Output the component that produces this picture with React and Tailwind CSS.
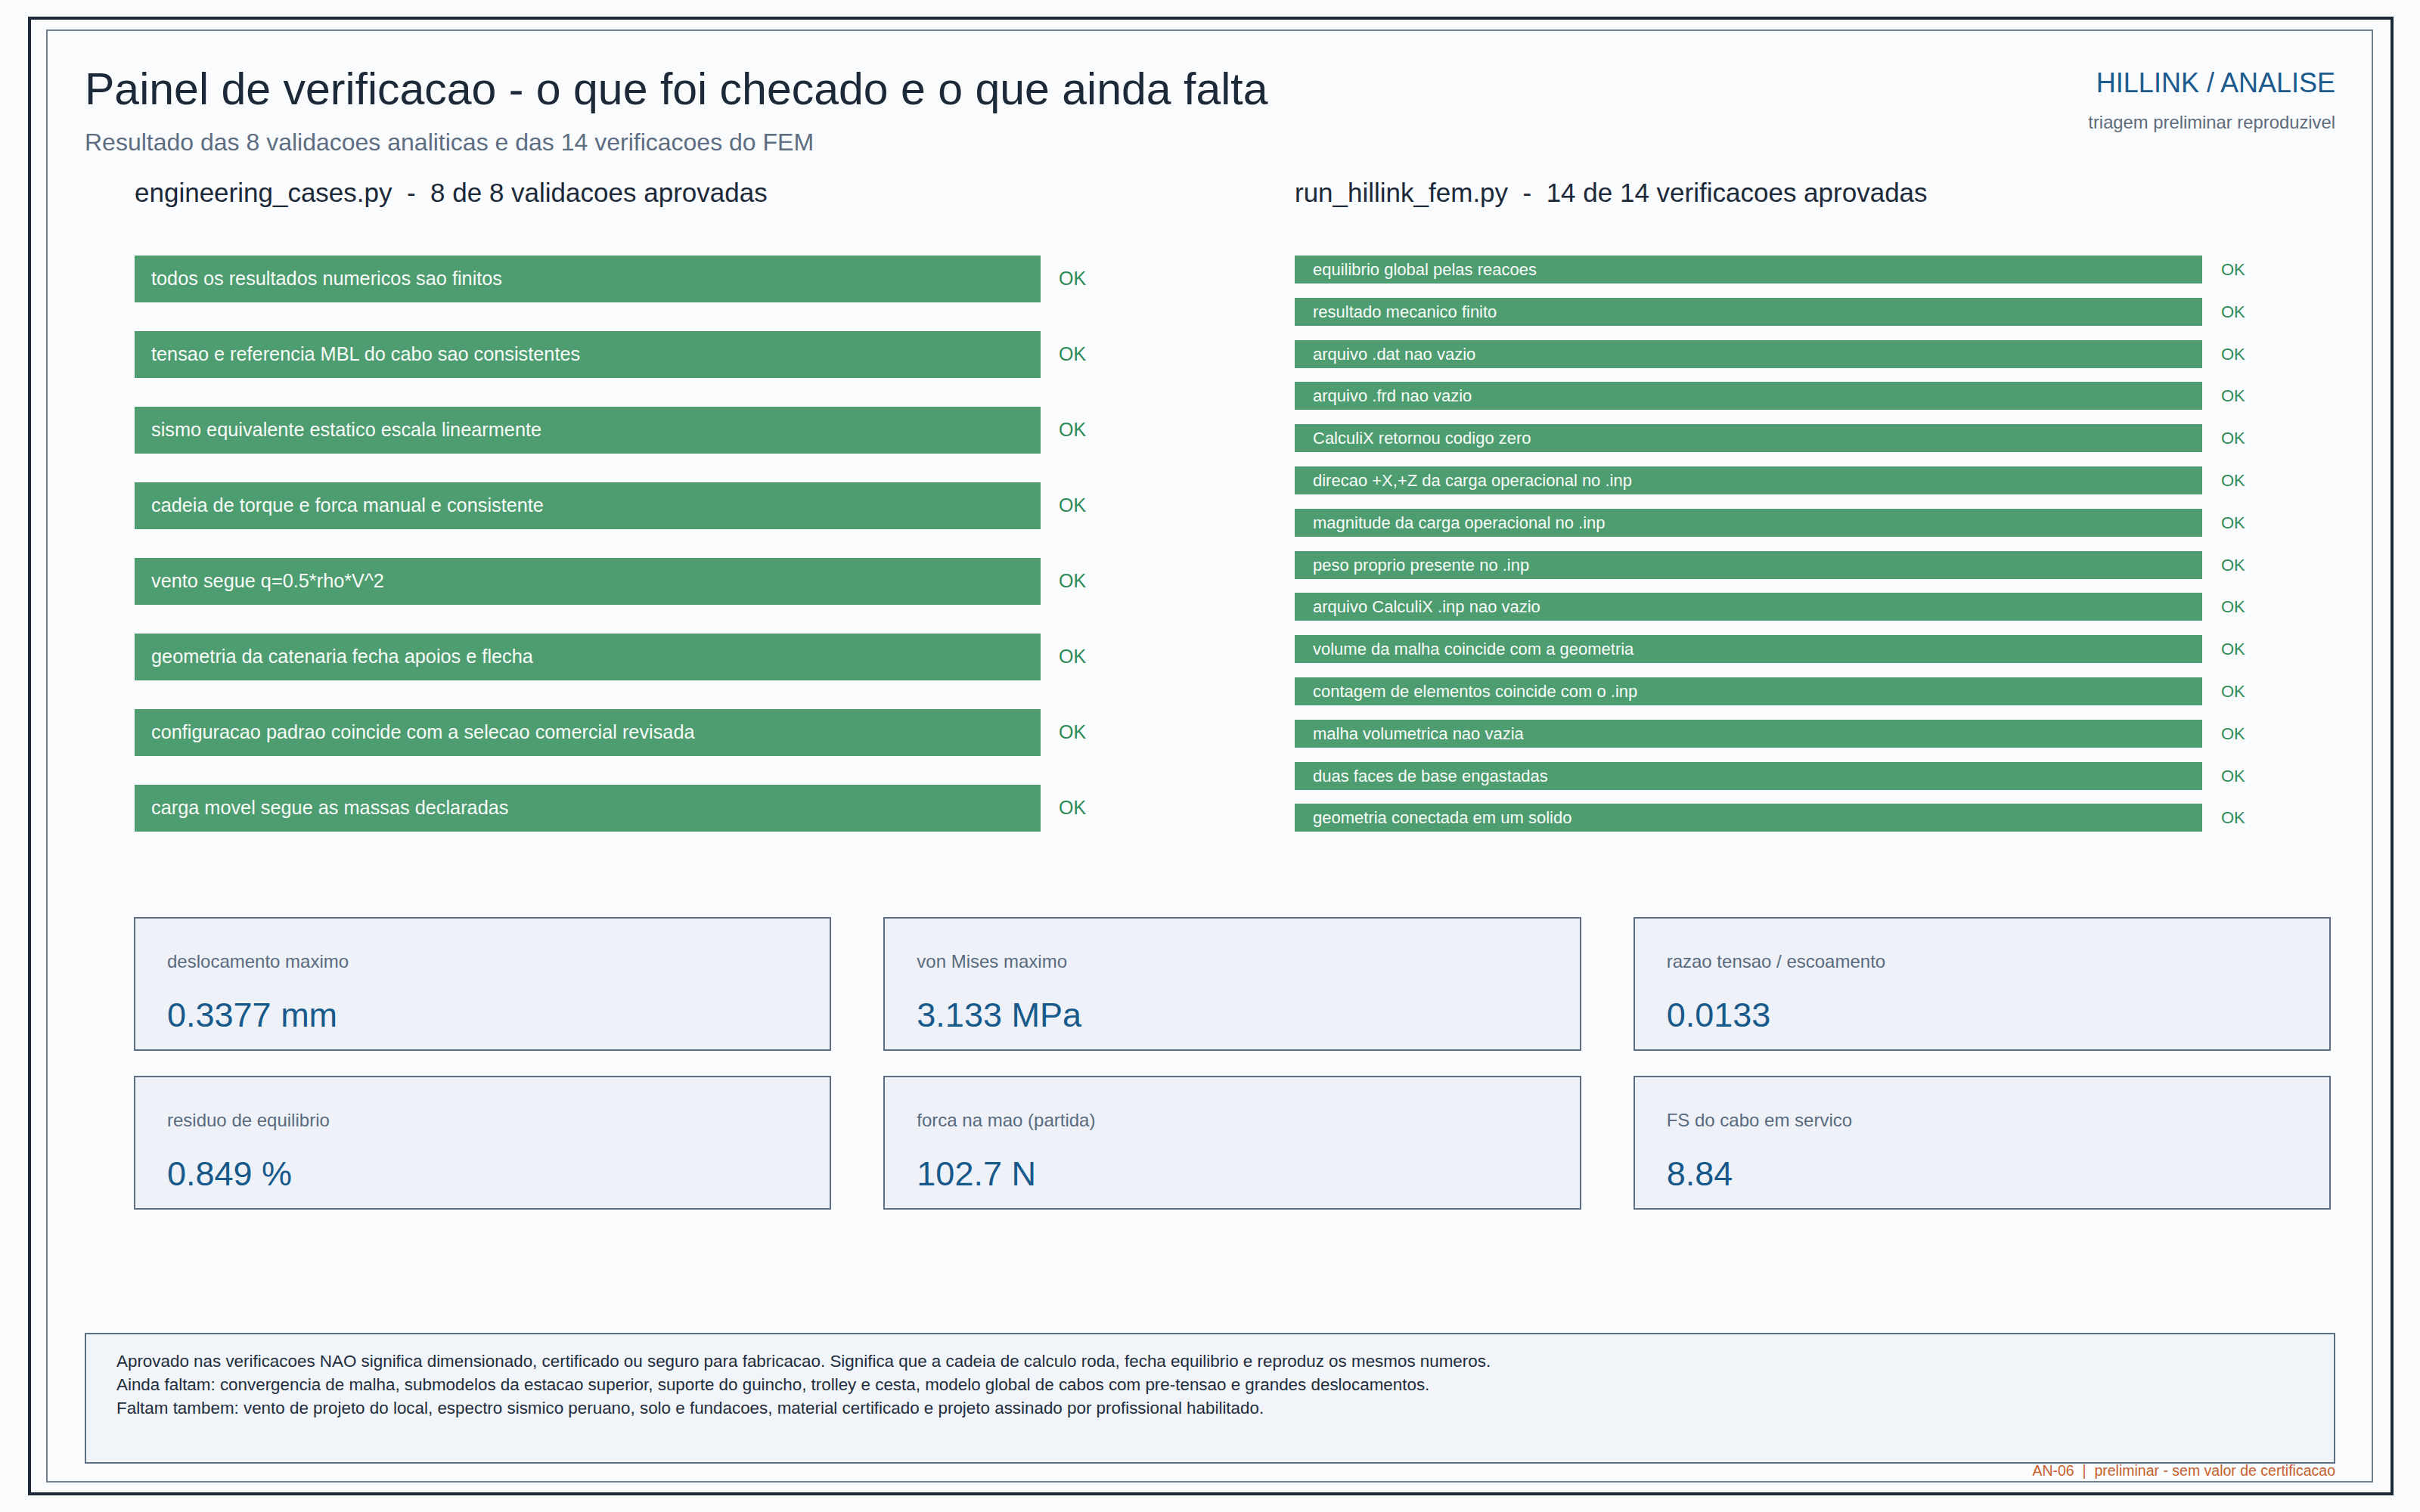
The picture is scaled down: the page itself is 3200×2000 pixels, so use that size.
import React from 'react'

const analyticChecks = [
  'todos os resultados numericos sao finitos',
  'tensao e referencia MBL do cabo sao consistentes',
  'sismo equivalente estatico escala linearmente',
  'cadeia de torque e forca manual e consistente',
  'vento segue q=0.5*rho*V^2',
  'geometria da catenaria fecha apoios e flecha',
  'configuracao padrao coincide com a selecao comercial revisada',
  'carga movel segue as massas declaradas',
]

const femChecks = [
  'equilibrio global pelas reacoes',
  'resultado mecanico finito',
  'arquivo .dat nao vazio',
  'arquivo .frd nao vazio',
  'CalculiX retornou codigo zero',
  'direcao +X,+Z da carga operacional no .inp',
  'magnitude da carga operacional no .inp',
  'peso proprio presente no .inp',
  'arquivo CalculiX .inp nao vazio',
  'volume da malha coincide com a geometria',
  'contagem de elementos coincide com o .inp',
  'malha volumetrica nao vazia',
  'duas faces de base engastadas',
  'geometria conectada em um solido',
]

const metrics = [
  { label: 'deslocamento maximo', value: '0.3377 mm' },
  { label: 'von Mises maximo', value: '3.133 MPa' },
  { label: 'razao tensao / escoamento', value: '0.0133' },
  { label: 'residuo de equilibrio', value: '0.849 %' },
  { label: 'forca na mao (partida)', value: '102.7 N' },
  { label: 'FS do cabo em servico', value: '8.84' },
]

const Metric = ({ label, value }) => (
  <div className="h-[177px] border-2 border-[#5d6d82] bg-[#eef2f8] pl-[42px] pt-[45px]">
    <div className="text-[24px] leading-none text-[#5a6a7e]">{label}</div>
    <div className="mt-[36px] text-[45px] leading-none text-[#17598a]">{value}</div>
  </div>
)

const App = () => {
  return (
    <div
      className="w-[3200px] h-[2000px] bg-[#fafbfd] pt-[22px] pl-[37px]"
      style={{ fontFamily: '"Liberation Sans", Arial, sans-serif' }}
    >
      <div className="w-[3128px] h-[1956px] border-4 border-[#1c2a3a] pl-[20px] pt-[13px]">
        <div className="w-[3077px] h-[1922px] border-2 border-[#6f8090] pl-[49px] pr-[48px] pt-[48px]">

          {/* header */}
          <div className="flex justify-between">
            <div>
              <div className="text-[59px] leading-none text-[#1c2938]">
                Painel de verificacao - o que foi checado e o que ainda falta
              </div>
              <div className="mt-[24px] text-[32px] leading-none text-[#5e6e82]">
                Resultado das 8 validacoes analiticas e das 14 verificacoes do FEM
              </div>
            </div>
            <div className="flex flex-col items-end pt-[3px]">
              <div className="text-[36px] leading-none text-[#1b5a8c]">HILLINK / ANALISE</div>
              <div className="mt-[22px] text-[23.8px] leading-none text-[#5f6b7a]">triagem preliminar reproduzivel</div>
            </div>
          </div>

          {/* checks */}
          <div className="mt-[33px] flex pl-[66px]">
            <div className="w-[1534px]">
              <div className="text-[35px] leading-none text-[#1c2938] whitespace-pre">
                {'engineering_cases.py  -  8 de 8 validacoes aprovadas'}
              </div>
              <div className="mt-[66px] flex flex-col gap-[38px]">
                {analyticChecks.map((item, index) => (
                  <div key={index} className="flex items-center">
                    <div className="w-[1198px] h-[62px] bg-[#4e9d70] flex items-center pl-[22px] text-[25.3px] text-[#f7fbf8]">
                      {item}
                    </div>
                    <span className="ml-[24px] text-[25px] text-[#2e8b57]">OK</span>
                  </div>
                ))}
              </div>
            </div>

            <div className="flex-1">
              <div className="text-[35px] leading-none text-[#1c2938] whitespace-pre">
                {'run_hillink_fem.py  -  14 de 14 verificacoes aprovadas'}
              </div>
              <div className="mt-[66px] flex flex-col gap-[18.8px]">
                {femChecks.map((item, index) => (
                  <div key={index} className="flex items-center">
                    <div className="w-[1200px] h-[37px] bg-[#4e9d70] flex items-center pl-[24px] text-[22px] text-[#f7fbf8]">
                      {item}
                    </div>
                    <span className="ml-[25px] text-[22px] text-[#2e8b57]">OK</span>
                  </div>
                ))}
              </div>
            </div>
          </div>

          {/* metrics */}
          <div className="mt-[113px] ml-[65px] w-[2905px] grid grid-cols-3 gap-x-[69px] gap-y-[33px]">
            {metrics.map((m, index) => (
              <Metric key={index} label={m.label} value={m.value} />
            ))}
          </div>

          {/* note */}
          <div className="mt-[163px] h-[173px] border-2 border-[#5d6d82] bg-[#f1f4f8] pl-[40px] pt-[20px] text-[22.4px] leading-[31px] text-[#1f2d3d]">
            <div>Aprovado nas verificacoes NAO significa dimensionado, certificado ou seguro para fabricacao. Significa que a cadeia de calculo roda, fecha equilibrio e reproduz os mesmos numeros.</div>
            <div>Ainda faltam: convergencia de malha, submodelos da estacao superior, suporte do guincho, trolley e cesta, modelo global de cabos com pre-tensao e grandes deslocamentos.</div>
            <div>Faltam tambem: vento de projeto do local, espectro sismico peruano, solo e fundacoes, material certificado e projeto assinado por profissional habilitado.</div>
          </div>
          <div className="text-right text-[19.5px] leading-none text-[#c8602e] whitespace-pre">
            {'AN-06  |  preliminar - sem valor de certificacao'}
          </div>
        </div>
      </div>
    </div>
  )
}

export default App
